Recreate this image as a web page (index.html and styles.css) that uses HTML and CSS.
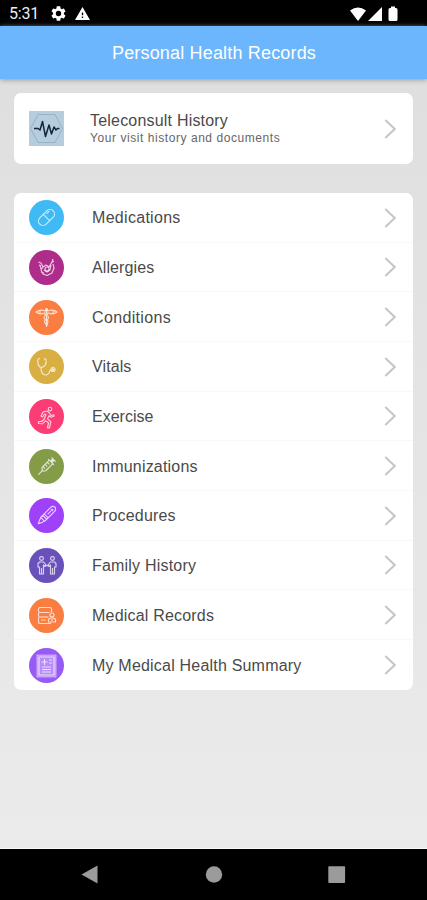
FILE: index.html
```html
<!DOCTYPE html>
<html lang="en">
<head>
<meta charset="utf-8">
<title>Personal Health Records</title>
<link rel="stylesheet" href="styles.css">
</head>
<body>
<svg class="defs" aria-hidden="true"><defs>
<symbol id="chevron" viewBox="0 0 12 20"><path d="M1.3 1 10.7 10 1.3 19"/></symbol>
</defs></svg>
<div class="screen">
<div class="status">
<span class="clock">5:31</span>
<svg class="gear" viewBox="2 2 20 20"><path d="M19.14 12.94c.04-.3.06-.61.06-.94 0-.32-.02-.64-.07-.94l2.03-1.58a.49.49 0 0 0 .12-.61l-1.92-3.32a.49.49 0 0 0-.59-.22l-2.39.96c-.5-.38-1.03-.7-1.62-.94l-.36-2.54a.48.48 0 0 0-.48-.41h-3.84a.47.47 0 0 0-.47.41l-.36 2.54c-.59.24-1.13.57-1.62.94l-2.39-.96a.48.48 0 0 0-.59.22L2.74 8.87c-.12.21-.08.47.12.61l2.03 1.58c-.05.3-.09.63-.09.94s.02.64.07.94l-2.03 1.58a.49.49 0 0 0-.12.61l1.92 3.32c.12.22.37.29.59.22l2.39-.96c.5.38 1.03.7 1.62.94l.36 2.54c.05.24.24.41.48.41h3.84c.24 0 .44-.17.47-.41l.36-2.54c.59-.24 1.13-.56 1.62-.94l2.39.96c.22.08.47 0 .59-.22l1.92-3.32a.47.47 0 0 0-.12-.61zM12 15.6a3.6 3.6 0 1 1 0-7.2 3.6 3.6 0 0 1 0 7.2z"/></svg>
<svg class="warn" viewBox="1 2 22 19"><path d="M1 21h22L12 2zm12-3h-2v-2h2zm0-4h-2v-4h2z"/></svg>
<svg class="signals" viewBox="0 0 50 16"><path d="M1 4.5Q9-1.5 17 4.5L9 15zM19 15 33 1v14zM39.5 3.5Q39.5 2 41 2h1V.5h4V2h1q1.500 0 1.500 1.500v10Q48.500 15 47 15h-6q-1.500 0-1.500-1.500z"/></svg>
</div>
<header class="header"><h1>Personal Health Records</h1></header>
<main class="content">
<section class="card history">
<svg class="pulse" viewBox="0 0 35 35"><path class="hex" d="M9 3.500h17L33.500 17.500 26 31.500H9L1.500 17.500z"/><path class="beat" d="M5 17.500h4l2 1.500 2.500-8.500 3 15 3.500-11.500 2.500 9 2.500-7 2 3 1.500-1.500h2"/></svg>
<div class="history-text"><div class="history-title">Teleconsult History</div><div class="history-sub">Your visit history and documents</div></div>
<svg class="chevron"><use href="#chevron"/></svg>
</section>
<section class="card list">
<div class="row"><svg class="icon blue" viewBox="0 0 35 35"><g transform="rotate(-45 17.500 17.500)"><rect x="8" y="13" width="19" height="9" rx="4.500"/><path d="M17.500 13v9M20 15h4"/></g></svg><span class="label medications">Medications</span><svg class="chevron"><use href="#chevron"/></svg></div>
<div class="row"><svg class="icon plum" viewBox="0 0 35 35"><path d="m9.500 12 2.500 1 2 4 3-2 3 2 3-5 1-3M12 16l-2-1m4 2-2 3 2 4 4 1.500 5-2.500 2-5-1-4M15 20l3 2 3-2 1-5M22 13l3-2M15 23l-3-1m-1-7 1 4"/><circle cx="18" cy="19" r="2"/></svg><span class="label allergies">Allergies</span><svg class="chevron"><use href="#chevron"/></svg></div>
<div class="row"><svg class="icon orange" viewBox="0 0 35 35"><path d="M7 12q4-3 9-1l1.500-1 1.500 1q5-2 9 1-4 3-8 1h-5q-4 2-8-1zM17.500 11v16M15 14q6 2 4 5-5 1-3 4l3 2M19.500 14q-6 2-4 5 5 1 3 4l-2 2M11 11v2m13-2v2"/><circle cx="17.500" cy="9.500" r="1"/></svg><span class="label conditions">Conditions</span><svg class="chevron"><use href="#chevron"/></svg></div>
<div class="row"><svg class="icon gold" viewBox="0 0 35 35"><path d="M11 9.500 9 10q-1 7 3 8.500 6-1 5-8l-2-1M12 18.500q0 7 4 7.500 4 0 4.500-3.500Q21 21 22 21"/><circle cx="24" cy="20.500" r="2"/><circle cx="24" cy="20.500" r=".7"/></svg><span class="label vitals">Vitals</span><svg class="chevron"><use href="#chevron"/></svg></div>
<div class="row"><svg class="icon pink" viewBox="0 0 35 35"><circle cx="21" cy="10" r="1.800"/><path d="M18 12l-4 1-2 4 1.500 1 2-3 1.500.5-2 5-2.500 2h-3v2l4 .3 3-3 3 2-1 5h2l1.300-6-3.300-3 1.500-3 2 1.500 3-1v-1.500l-3 .7-2-3z"/></svg><span class="label exercise">Exercise</span><svg class="chevron"><use href="#chevron"/></svg></div>
<div class="row"><svg class="icon olive" viewBox="0 0 35 35"><g transform="rotate(45 17.500 17.500)"><path d="M15 11h5v10l-1.500 2h-2L15 21zM17.500 11V7.500M14.500 7.500h6M13.500 11h8M17.500 23v6M15 14h3m-3 3h3m-3 3h3M16.500 8v3m2-3v3"/></g></svg><span class="label immunizations">Immunizations</span><svg class="chevron"><use href="#chevron"/></svg></div>
<div class="row"><svg class="icon violet" viewBox="0 0 35 35"><g transform="rotate(45 17.500 17.500)"><path d="M14.700 20V8.500q0-2 2.800-3 2.800 1 2.800 3V20zM14.700 20h5.600v3h-5.600zM15.500 23v2l2 4 2-4v-2M17.500 11v5M15 18h5"/><circle cx="17.500" cy="9.500" r=".7"/></g></svg><span class="label procedures">Procedures</span><svg class="chevron"><use href="#chevron"/></svg></div>
<div class="row"><svg class="icon indigo" viewBox="0 0 35 35"><circle cx="12.500" cy="10.500" r="1.900"/><circle cx="23.500" cy="10.500" r="1.900"/><path d="M10.500 14h4l3 3.500-1.500 1-1.500-1.500V26h-4v-7H9v-3.500zM25.500 14h-4l-3 3.500 1.500 1 1.500-1.500V26h4v-7H27v-3.500zM12.500 20v6m11-6v6M16 17.500h4"/></svg><span class="label family">Family History</span><svg class="chevron"><use href="#chevron"/></svg></div>
<div class="row"><svg class="icon orange" viewBox="0 0 35 35"><path d="M22.500 14.500V11q0-1.500-1.500-1.500H11q-1.500 0-1.500 1.500v2q0 1.500 1 1.500h10M10.500 14.500q-1 0-1 1.500v1.500q0 1.500 1 1.500h9M10.500 19q-1 0-1 1.500v3.500q0 1.500 1.500 1.500h11M12 22h5"/><circle cx="23" cy="17" r="2"/><path d="M19.500 24q-1-4 3.500-4t3.500 4zM23 21v2"/></svg><span class="label records">Medical Records</span><svg class="chevron"><use href="#chevron"/></svg></div>
<div class="row"><svg class="icon purple" viewBox="0 0 35 35"><rect class="paper" x="8" y="7" width="19" height="22"/><rect x="10" y="9" width="15" height="18"/><path d="M15.500 11v6M12.500 14h6M20 12h3m-3 3h3m-10 4h9m-9 2.500h9M13 24h9"/></svg><span class="label summary">My Medical Health Summary</span><svg class="chevron"><use href="#chevron"/></svg></div>
</section>
</main>
<nav class="nav"><svg viewBox="0 0 427 51"><path d="M81.500 25.500 97.500 16.500v18z"/><circle cx="214" cy="25.500" r="8.200"/><rect x="328.300" y="17.200" width="16.800" height="16.800" rx="1"/></svg></nav>
</div>
</body>
</html>
```
FILE: styles.css
```css
* { box-sizing: border-box; }
body { margin: 0; font-family: "Liberation Sans", Arial, sans-serif; }
.defs { display: none; }
.screen { width: 427px; height: 900px; display: flex; flex-direction: column; overflow: hidden; background: #000; }
.status { height: 26px; flex: none; display: flex; align-items: center; padding: 1px 28px 0 9px; color: #eee; background: #000; }
.status svg { fill: #fff; }
.clock { width: 42px; font: 400 16px/20px Roboto, sans-serif; letter-spacing: -.2px; }
.gear { width: 15px; height: 15px; }
.warn { width: 15px; height: 13px; margin-left: 9px; }
.signals { width: 50px; height: 16px; margin-left: auto; }
.header { height: 53px; flex: none; display: flex; align-items: center; justify-content: center; padding-left: 1px; background: #6bb6fc; box-shadow: 0 1px 5px #999; z-index: 1; }
h1 { margin: 0; font-size: 18px; line-height: 24px; font-weight: 400; color: #fff; letter-spacing: .17px; }
.content { flex: 1; padding: 14px 14px 0; background: linear-gradient(#dfdfdf, #ebebeb); border-bottom: 1px solid #f8f8f8; }
.card { width: 399px; border-radius: 7px; background: #fff; }
.history { height: 71px; display: flex; align-items: center; padding: 0 17px 0 15px; }
.pulse { width: 35px; height: 35px; background: #b5cddc; fill: none; }
.hex { stroke: #8eabc0; stroke-width: .8; }
.beat { stroke: #14263e; stroke-width: 1.5; stroke-linejoin: round; }
.history-text { margin-left: 26px; padding-top: 2px; white-space: nowrap; }
.history-title { font-size: 16px; line-height: 18px; color: #4a4a4a; letter-spacing: .2px; }
.history-sub { font-size: 12px; line-height: 17px; color: #666; letter-spacing: .56px; }
.chevron { width: 12px; height: 20px; flex: none; margin-left: auto; fill: none; stroke: #c6c6c6; stroke-width: 2; }
.list { height: 496.5px; margin-top: 29px; display: grid; grid-template-rows: repeat(10, 1fr); }
.row { display: flex; align-items: center; padding: 1px 17px 0 15px; border-bottom: 1px solid #f8f8f8; }
.row:last-child { border-bottom: 0; }
.icon { width: 35px; height: 35px; border-radius: 50%; fill: none; stroke: rgba(255,255,255,.75); stroke-width: 1.15; stroke-linejoin: round; }
.label { margin-left: 28px; padding-top: 1px; font-size: 16px; line-height: 20px; color: #4a4a4a; letter-spacing: .2px; white-space: nowrap; }
.medications { letter-spacing: .3px; }
.allergies { letter-spacing: .1px; }
.conditions { letter-spacing: .35px; }
.vitals { letter-spacing: .1px; }
.exercise { letter-spacing: 0; }
.blue { background: #40baf5; }
.plum { background: #b02c8b; }
.orange { background: #fa7d42; }
.gold { background: #d9ae42; }
.pink { background: #fc3d75; }
.olive { background: #849c48; }
.violet { background: #a041fa; }
.indigo { background: #6950bb; }
.purple { background: #985af5; }
.paper { fill: rgba(255,255,255,.3); stroke-opacity: .6; }
.nav { height: 51px; flex: none; background: #000; }
.nav svg { display: block; width: 427px; height: 51px; fill: #9b9b9b; }
```
